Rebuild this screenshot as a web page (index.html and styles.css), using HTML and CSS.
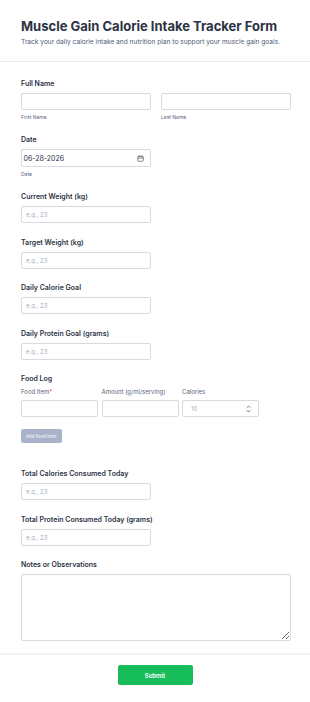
FILE: index.html
```
<!DOCTYPE html>
<html lang="en">
<head>
  <meta charset="UTF-8">
  <meta name="viewport" content="width=device-width, initial-scale=1.0">
  <title>Muscle Gain Calorie Intake Tracker Form</title>
  <link rel="stylesheet" href="styles.css">
</head>
<body>

  <div class="form-page">
    <!-- Header -->
    <div class="form-header">
      <h1 class="form-title">Muscle Gain Calorie Intake Tracker Form</h1>
      <p class="form-subtitle">Track your daily calorie intake and nutrition plan to support your muscle gain goals.</p>
    </div>

    <!-- Fields -->
    <div class="form-body">

      <div class="field field-sub">
        <label class="field-label">Full Name</label>
        <div class="name-row">
          <div class="name-col">
            <input class="text-input" type="text">
            <span class="sub-label">First Name</span>
          </div>
          <div class="name-col">
            <input class="text-input" type="text">
            <span class="sub-label">Last Name</span>
          </div>
        </div>
      </div>

      <div class="field field-sub">
        <label class="field-label">Date</label>
        <div class="text-input date-input">
          <span>06-28-2026</span>
          <svg class="date-icon" width="7" height="7" viewBox="0 0 14 14" fill="none" stroke="#4b5563" stroke-width="1.4">
            <rect x="1.5" y="2.5" width="11" height="10" rx="1.5"></rect>
            <path d="M1.5 6h11M4.5 1v3M9.5 1v3"></path>
          </svg>
        </div>
        <span class="sub-label">Date</span>
      </div>

      <div class="field">
        <label class="field-label">Current Weight (kg)</label>
        <input class="text-input" type="text" placeholder="e.g., 23">
      </div>

      <div class="field">
        <label class="field-label">Target Weight (kg)</label>
        <input class="text-input" type="text" placeholder="e.g., 23">
      </div>

      <div class="field">
        <label class="field-label">Daily Calorie Goal</label>
        <input class="text-input" type="text" placeholder="e.g., 23">
      </div>

      <div class="field">
        <label class="field-label">Daily Protein Goal (grams)</label>
        <input class="text-input" type="text" placeholder="e.g., 23">
      </div>

      <!-- Food log table -->
      <div class="field food-log">
        <label class="field-label">Food Log</label>
        <div class="food-grid">
          <span class="col-label">Food Item<span class="required">*</span></span>
          <span class="col-label">Amount (g/ml/serving)</span>
          <span class="col-label">Calories</span>
          <input class="text-input" type="text">
          <input class="text-input" type="text">
          <div class="text-input number-input">
            <span>10</span>
            <svg width="5" height="8" viewBox="0 0 10 16" fill="none" stroke="#4b5563" stroke-width="1.6" stroke-linecap="round" stroke-linejoin="round">
              <path d="M2 5l3-3 3 3M2 11l3 3 3-3"></path>
            </svg>
          </div>
        </div>
        <button class="add-button" type="button">Add Food Item</button>
      </div>

      <div class="field">
        <label class="field-label">Total Calories Consumed Today</label>
        <input class="text-input" type="text" placeholder="e.g., 23">
      </div>

      <div class="field">
        <label class="field-label">Total Protein Consumed Today (grams)</label>
        <input class="text-input" type="text" placeholder="e.g., 23">
      </div>

      <div class="field last-field">
        <label class="field-label">Notes or Observations</label>
        <textarea class="notes-input"></textarea>
      </div>
    </div>

    <!-- Footer -->
    <div class="form-footer">
      <button class="submit-button" type="submit">Submit</button>
    </div>
  </div>

</body>
</html>
```

FILE: styles.css
```
* {
  box-sizing: border-box;
}

body {
  margin: 0;
  font-family: Inter, "Noto Sans", sans-serif;
  background-color: #fff;
  color: #2c3345;
}

/* Title block */
.form-header {
  padding: 17px 21px 14px;
  border-bottom: 1px solid #eaebef;
}

.form-title {
  margin: 0;
  font-size: 13px;
  line-height: 18px;
  font-weight: 700;
  color: #2c3345;
  white-space: nowrap;
}

.form-subtitle {
  margin: 3px 0 0;
  font-size: 6.6px;
  line-height: 9px;
  color: #4f5a78;
}

/* Field list */
.form-body {
  padding: 17px 21px 12px;
}

.field {
  display: flex;
  flex-direction: column;
  align-items: flex-start;
  margin-bottom: 14.5px;
}

.field-sub {
  margin-bottom: 14px;
}

.last-field {
  margin-bottom: 0;
}

.field-label {
  font-size: 7px;
  line-height: 10px;
  font-weight: 600;
  margin-bottom: 4px;
  color: #2c3345;
}

.text-input {
  width: 130px;
  height: 17px;
  margin: 0;
  padding: 0 4px;
  border: 1px solid #d8dae2;
  border-radius: 2px;
  background: #fff;
  font-family: inherit;
  font-size: 6px;
  color: #2c3345;
  outline: none;
}

.text-input::placeholder {
  color: #a5acbd;
}

.sub-label {
  display: block;
  margin-top: 3px;
  font-size: 5px;
  line-height: 8px;
  color: #57647e;
}

.name-row {
  display: flex;
  gap: 10px;
}

.name-col {
  display: flex;
  flex-direction: column;
}

.date-input {
  display: flex;
  align-items: center;
  justify-content: space-between;
  height: 18px;
  padding: 0 6px 0 1.5px;
  font-size: 7px;
  color: #2c3345;
}

/* Food log */
.food-grid {
  display: grid;
  grid-template-columns: 77px 77px 77px;
  column-gap: 3.5px;
  row-gap: 4px;
}

.col-label {
  font-size: 6px;
  line-height: 8px;
  color: #57647e;
}

.required {
  color: #f23a3c;
}

.food-grid .text-input {
  width: 77px;
}

.number-input {
  display: flex;
  align-items: center;
  justify-content: space-between;
  padding: 0 7px 0 8px;
  color: #a5acbd;
  font-size: 6px;
}

.add-button {
  margin-top: 12px;
  margin-bottom: 11.5px;
  height: 14px;
  padding: 0 5px;
  border: none;
  border-radius: 2px;
  background-color: #a8b2c8;
  color: #eef0f5;
  font-family: inherit;
  font-size: 4.4px;
  font-weight: 500;
}

.notes-input {
  width: 270px;
  height: 67px;
  margin: 0;
  border: 1px solid #d8dae2;
  border-radius: 2px;
  resize: vertical;
}

/* Footer with submit */
.form-footer {
  display: flex;
  justify-content: center;
  padding: 10px 0 17px;
  border-top: 2px solid #f3f3f5;
}

.submit-button {
  width: 75px;
  height: 20px;
  border: none;
  border-radius: 2px;
  background-color: #18bd5b;
  color: #fff;
  font-family: inherit;
  font-size: 6px;
  font-weight: 600;
}
```
